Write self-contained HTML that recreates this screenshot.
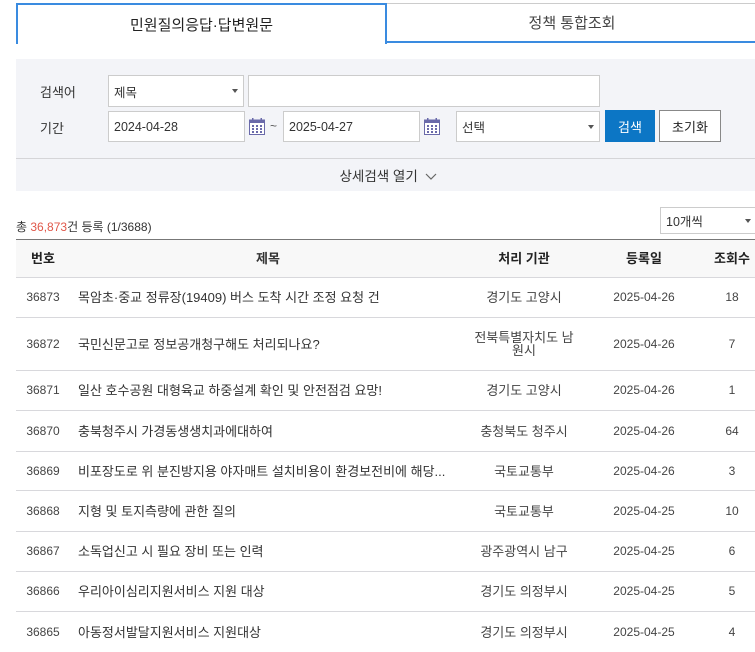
<!DOCTYPE html>
<html><head><meta charset="utf-8"><style>
*{box-sizing:border-box;margin:0;padding:0}
body{width:755px;height:642px;overflow:hidden;background:#fff;font-family:"Liberation Sans","Noto Sans CJK KR",sans-serif;color:#333;font-size:12px;position:relative}
.a{position:absolute}
.box{position:absolute;background:#fff;border:1px solid #ccc;font-size:12.5px;color:#333;display:flex;align-items:center;padding-left:5px}
.arr{position:absolute;right:5px;top:50%;margin-top:-2px;width:0;height:0;border-left:3px solid transparent;border-right:3px solid transparent;border-top:4px solid #555}
.row{position:absolute;left:16px;width:760px;border-bottom:1px solid #d8d8dc}
.row div{position:absolute;top:0;height:100%;display:flex;align-items:center;justify-content:center;text-align:center;color:#444;font-size:12px;line-height:13px}
.c1{left:0;width:54px}.c2{left:62px;width:420px;justify-content:flex-start!important;text-align:left!important;color:#333!important;font-size:13px!important}
.c3{left:446px;width:124px;font-size:13px!important}.c4{left:578px;width:100px}.c5{left:696px;width:40px}
.hd div{font-weight:bold;color:#222;font-size:13px}
</style></head><body>
<div class="a" style="left:16px;top:3px;width:371px;height:41px;border:2px solid #3a8be0;border-bottom:none;background:#fff;display:flex;align-items:center;justify-content:center;font-size:15px;color:#222">민원질의응답·답변원문</div>
<div class="a" style="left:387px;top:3px;width:370px;height:40px;border-top:1px solid #ccc;border-bottom:2px solid #3a8be0;display:flex;align-items:center;justify-content:center;font-size:15px;color:#444">정책 통합조회</div>
<div class="a" style="left:16px;top:59px;width:745px;height:132px;background:#f3f4f8"></div>
<div class="a" style="left:16px;top:158px;width:745px;height:1px;background:#d5d5d8"></div>
<div class="a" style="left:40px;top:82px;font-size:13px">검색어</div>
<div class="a" style="left:40px;top:118px;font-size:13px">기간</div>
<div class="box" style="left:108px;top:75px;width:136px;height:32px">제목<span class="arr"></span></div>
<div class="box" style="left:248px;top:75px;width:352px;height:32px"></div>
<div class="box" style="left:108px;top:111px;width:137px;height:31px">2024-04-28</div>
<svg class="a" style="left:248px;top:117px" width="18" height="19" viewBox="0 0 18 19"><rect x="1.5" y="3" width="15" height="14.5" fill="#fff" stroke="#6a6aaa"/><rect x="1.5" y="3" width="15" height="3" fill="#6a6aaa"/><rect x="4" y="1" width="1.5" height="4" fill="#6a6aaa"/><rect x="12.5" y="1" width="1.5" height="4" fill="#6a6aaa"/><g fill="#6a6aaa"><rect x="4" y="8" width="2" height="2"/><rect x="8" y="8" width="2" height="2"/><rect x="12" y="8" width="2" height="2"/><rect x="4" y="11" width="2" height="2"/><rect x="8" y="11" width="2" height="2"/><rect x="12" y="11" width="2" height="2"/><rect x="4" y="14" width="2" height="2"/><rect x="8" y="14" width="2" height="2"/><rect x="12" y="14" width="2" height="2"/></g></svg>
<div class="a" style="left:270px;top:119px;color:#555">~</div>
<div class="box" style="left:283px;top:111px;width:137px;height:31px">2025-04-27</div>
<svg class="a" style="left:423px;top:117px" width="18" height="19" viewBox="0 0 18 19"><rect x="1.5" y="3" width="15" height="14.5" fill="#fff" stroke="#6a6aaa"/><rect x="1.5" y="3" width="15" height="3" fill="#6a6aaa"/><rect x="4" y="1" width="1.5" height="4" fill="#6a6aaa"/><rect x="12.5" y="1" width="1.5" height="4" fill="#6a6aaa"/><g fill="#6a6aaa"><rect x="4" y="8" width="2" height="2"/><rect x="8" y="8" width="2" height="2"/><rect x="12" y="8" width="2" height="2"/><rect x="4" y="11" width="2" height="2"/><rect x="8" y="11" width="2" height="2"/><rect x="12" y="11" width="2" height="2"/><rect x="4" y="14" width="2" height="2"/><rect x="8" y="14" width="2" height="2"/><rect x="12" y="14" width="2" height="2"/></g></svg>
<div class="box" style="left:456px;top:111px;width:144px;height:31px">선택<span class="arr"></span></div>
<div class="a" style="left:605px;top:110px;width:50px;height:32px;background:#0c76c5;color:#fff;display:flex;align-items:center;justify-content:center;font-size:13px">검색</div>
<div class="a" style="left:659px;top:110px;width:62px;height:32px;background:#fff;border:1px solid #888;display:flex;align-items:center;justify-content:center;font-size:13px;color:#222">초기화</div>
<div class="a" style="left:0;top:165px;width:776px;text-align:center;font-size:13.5px;color:#333">상세검색 열기 <svg width="12" height="8" viewBox="0 0 12 8" style="vertical-align:middle;margin-left:3px"><path d="M1 1l5 5 5-5" fill="none" stroke="#666" stroke-width="1.2"/></svg></div>
<div class="a" style="left:16px;top:218px;font-size:12px;color:#333">총 <span style="color:#e0584a">36,873</span>건 등록 (1/3688)</div>
<div class="box" style="left:660px;top:207px;width:100px;height:27px">10개씩<span class="arr" style="right:8px"></span></div>
<div class="a" style="left:16px;top:239px;width:745px;height:1px;background:#777"></div>
<div class="row hd" style="top:240px;height:38px;background:#f8f8f8"><div class="c1">번호</div><div class="c2" style="justify-content:center!important;left:62px;width:380px">제목</div><div class="c3">처리 기관</div><div class="c4">등록일</div><div class="c5">조회수</div></div>
<div class="row" style="top:278px;height:40px"><div class="c1">36873</div><div class="c2">목암초·중교 정류장(19409) 버스 도착 시간 조정 요청 건</div><div class="c3">경기도 고양시</div><div class="c4">2025-04-26</div><div class="c5">18</div></div>
<div class="row" style="top:318px;height:53px"><div class="c1">36872</div><div class="c2">국민신문고로 정보공개청구해도 처리되나요?</div><div class="c3">전북특별자치도 남<br>원시</div><div class="c4">2025-04-26</div><div class="c5">7</div></div>
<div class="row" style="top:371px;height:40px"><div class="c1">36871</div><div class="c2">일산 호수공원 대형육교 하중설계 확인 및 안전점검 요망!</div><div class="c3">경기도 고양시</div><div class="c4">2025-04-26</div><div class="c5">1</div></div>
<div class="row" style="top:411px;height:41px"><div class="c1">36870</div><div class="c2">충북청주시 가경동생생치과에대하여</div><div class="c3">충청북도 청주시</div><div class="c4">2025-04-26</div><div class="c5">64</div></div>
<div class="row" style="top:452px;height:39px"><div class="c1">36869</div><div class="c2">비포장도로 위 분진방지용 야자매트 설치비용이 환경보전비에 해당...</div><div class="c3">국토교통부</div><div class="c4">2025-04-26</div><div class="c5">3</div></div>
<div class="row" style="top:491px;height:41px"><div class="c1">36868</div><div class="c2">지형 및 토지측량에 관한 질의</div><div class="c3">국토교통부</div><div class="c4">2025-04-25</div><div class="c5">10</div></div>
<div class="row" style="top:532px;height:40px"><div class="c1">36867</div><div class="c2">소독업신고 시 필요 장비 또는 인력</div><div class="c3">광주광역시 남구</div><div class="c4">2025-04-25</div><div class="c5">6</div></div>
<div class="row" style="top:572px;height:40px"><div class="c1">36866</div><div class="c2">우리아이심리지원서비스 지원 대상</div><div class="c3">경기도 의정부시</div><div class="c4">2025-04-25</div><div class="c5">5</div></div>
<div class="row" style="top:612px;height:40px;border-bottom:none"><div class="c1">36865</div><div class="c2">아동정서발달지원서비스 지원대상</div><div class="c3">경기도 의정부시</div><div class="c4">2025-04-25</div><div class="c5">4</div></div>
</body></html>
